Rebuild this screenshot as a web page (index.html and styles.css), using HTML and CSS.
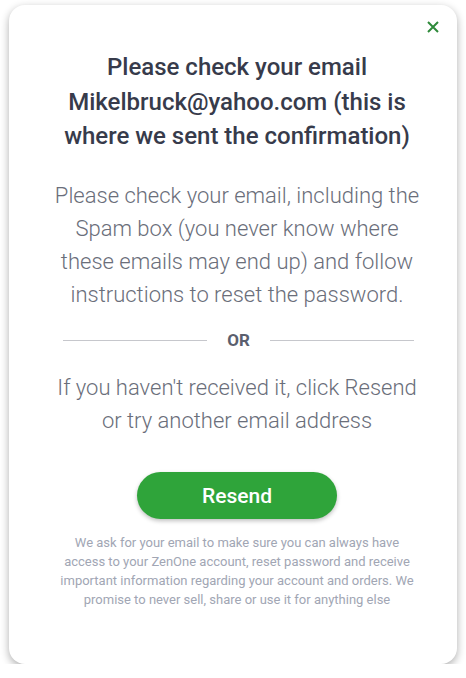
FILE: index.html
```html
<!DOCTYPE html>
<html lang="en">
<head>
<meta charset="utf-8">
<title>Check your email</title>
<link rel="stylesheet" href="styles.css">
</head>
<body>
<div class="card">
  <button class="close" aria-label="Close">
    <svg width="12" height="12" viewBox="0 0 12 12"><path d="M1 1L11 11M11 1L1 11" stroke="#2f8a3b" stroke-width="2" fill="none"/></svg>
  </button>
  <h1 class="title">Please check your email Mikelbruck@yahoo.com (this is where we sent the confirmation)</h1>
  <p class="text">Please check your email, including the Spam box (you never know where these emails may end up) and follow instructions to reset the password.</p>
  <div class="divider"><span class="line"></span><span class="or">OR</span><span class="line"></span></div>
  <p class="text text-second">If you haven't received it, click Resend or try another email address</p>
  <div class="actions"><button class="resend">Resend</button></div>
  <p class="note">We ask for your email to make sure you can always have access to your ZenOne account, reset password and receive important information regarding your account and orders. We promise to never sell, share or use it for anything else</p>
</div>
</body>
</html>
```
FILE: styles.css
```css
* { box-sizing: border-box; }
html, body { margin: 0; background: #ffffff; }
body {
  padding: 5px 9px 0 9px;
  font-family: Roboto, "Liberation Sans", sans-serif;
}
.card {
  position: relative;
  width: 448px;
  height: 659px;
  background: #ffffff;
  border-radius: 16px;
  box-shadow: 0 3px 8px rgba(0,0,0,0.32);
  padding: 45px 36px 0 44px;
  text-align: center;
}
.close {
  position: absolute;
  top: 10px;
  right: 12px;
  width: 24px;
  height: 24px;
  border: 0;
  background: transparent;
  padding: 0;
  display: flex;
  align-items: center;
  justify-content: center;
}
.title {
  margin: 0;
  font-size: 24px;
  line-height: 34.5px;
  font-weight: 500;
  color: #373b4b;
}
.text {
  margin: 25px 0 0;
  font-size: 22px;
  line-height: 33px;
  font-weight: 300;
  color: #6a6e7a;
}
.divider {
  display: flex;
  align-items: center;
  gap: 20px;
  height: 20px;
  margin: 19.5px 7px 0 10px;
}
.line {
  flex: 1;
  height: 1px;
  background: #c6c7cc;
}
.or {
  font-size: 17px;
  font-weight: 700;
  color: #5b5f6e;
}
.text-second { margin-top: 20.5px; }
.actions {
  display: flex;
  justify-content: center;
  margin-top: 35.5px;
}
.resend {
  width: 200px;
  height: 47px;
  border: 0;
  border-radius: 24px;
  background: #2fa43a;
  color: #ffffff;
  font-family: Roboto, "Liberation Sans", sans-serif;
  font-size: 21px;
  font-weight: 500;
  box-shadow: 0 2px 4px rgba(0,0,0,0.25);
}
.note {
  margin: 13.5px 0 0;
  font-size: 13px;
  line-height: 19px;
  color: #a1a6b4;
}
```
